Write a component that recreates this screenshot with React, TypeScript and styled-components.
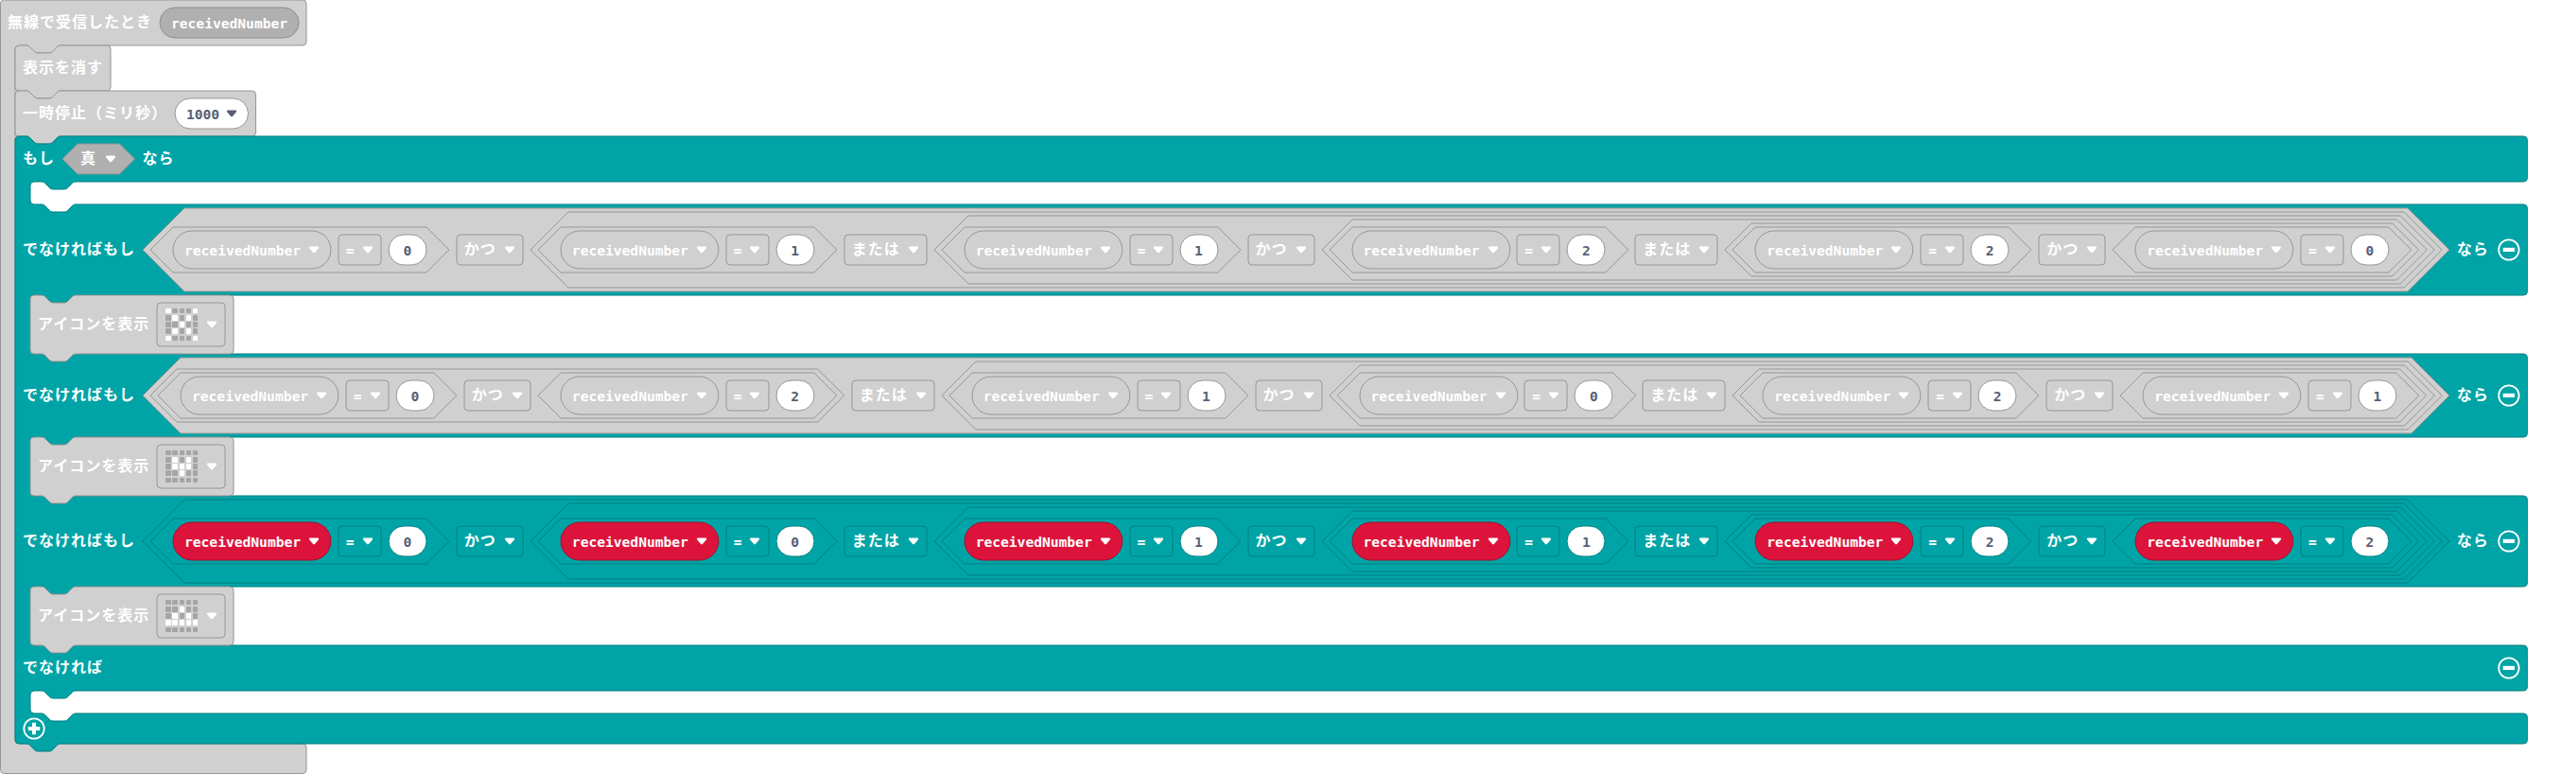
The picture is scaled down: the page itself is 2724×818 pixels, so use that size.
import React from "react";
import styled, { createGlobalStyle } from "styled-components";

const GlobalStyle = createGlobalStyle`
  html, body { margin: 0; padding: 0; background: #fff; }
  #root { width: 2724px; height: 818px; overflow: hidden; }
`;

type Tone = "muted" | "logic" | "variable" | "input" | "inset";

const TONES: Record<Tone, { fill: string; stroke: string }> = {
  muted: { fill: "#d0d0d0", stroke: "#969696" },
  inset: { fill: "#b0b0b0", stroke: "#8f8f8f" },
  logic: { fill: "#00a4a6", stroke: "#007f81" },
  variable: { fill: "#dc143c", stroke: "#a50f2d" },
  input: { fill: "#ffffff", stroke: "#969696" },
};

/* ---------- geometry ---------- */

const GAP = 8;
const CORNER = 4;
const TAB_RIGHTWARD = "c2 0 3 1 4 2l4 4c1 1 2 2 4 2h12c2 0 3 -1 4 -2l4 -4c1 -1 2 -2 4 -2";
const TAB_LEFTWARD = "c-2 0 -3 1 -4 2l-4 4c-1 1 -2 2 -4 2h-12c-2 0 -3 -1 -4 -2l-4 -4c-1 -1 -2 -2 -4 -2";

const statementPath = (w: number, h: number) =>
  `M0 ${CORNER}a4 4 0 0 1 4 -4h8${TAB_RIGHTWARD}H${w - 4}a4 4 0 0 1 4 4V${h - 4}a4 4 0 0 1 -4 4H48${TAB_LEFTWARD}H4a4 4 0 0 1 -4 -4z`;

/* Bars are the solid rows of the C-shaped block; slots are the mouths between them. */
const mouthPath = (w: number, bars: number[], slots: number[]) => {
  let y = 0;
  let d = `M0 4a4 4 0 0 1 4 -4h8${TAB_RIGHTWARD}H${w - 4}`;
  bars.forEach((bar, i) => {
    d += `a4 4 0 0 1 4 4V${y + bar - 4}a4 4 0 0 1 -4 4`;
    y += bar;
    if (i < slots.length) {
      d += `H64${TAB_LEFTWARD}H20a4 4 0 0 0 -4 4V${y + slots[i] - 4}a4 4 0 0 0 4 4h8${TAB_RIGHTWARD}H${w - 4}`;
      y += slots[i];
    }
  });
  return d + `H48${TAB_LEFTWARD}H4a4 4 0 0 1 -4 -4z`;
};

const HAT_PATH =
  `M.5 4a4 4 0 0 1 4 -4H320a4 4 0 0 1 4 4V44a4 4 0 0 1 -4 4H64${TAB_LEFTWARD}H20a4 4 0 0 0 -4 4` +
  "V782a4 4 0 0 0 4 4H320a4 4 0 0 1 4 4V813.5a4 4 0 0 1 -4 4H4.5a4 4 0 0 1 -4 -4z";

const hexPath = (w: number, h: number) =>
  `M0 ${h / 2}L${h / 2} 0H${w - h / 2}L${w} ${h / 2}L${w - h / 2} ${h}H${h / 2}z`;

const roundPath = (w: number, h: number, r: number) =>
  `M${r} 0H${w - r}a${r} ${r} 0 0 1 ${r} ${r}V${h - r}a${r} ${r} 0 0 1 ${-r} ${r}H${r}a${r} ${r} 0 0 1 ${-r} ${-r}V${r}a${r} ${r} 0 0 1 ${r} ${-r}z`;

/* ---------- styled parts ---------- */

const Workspace = styled.main`
  display: flex;
  align-items: flex-start;
  color: #fff;
`;

const Outline = styled.svg`
  position: absolute;
  inset: 0;
  width: 100%;
  height: 100%;
  overflow: visible;
  pointer-events: none;
`;

const HatBlock = styled.section`
  position: relative;
  width: 2673px;
`;

const BlockRow = styled.div<{ $height: number }>`
  position: relative;
  display: flex;
  align-items: center;
  gap: ${GAP}px;
  box-sizing: border-box;
  height: ${(p) => p.$height}px;
  padding: 0 8px;
`;

const Stack = styled.div`
  position: relative;
  display: flex;
  flex-direction: column;
  align-items: flex-start;
  padding-left: 16px;
`;

const StatementBox = styled.div<{ $width: number; $height: number }>`
  position: relative;
  width: ${(p) => p.$width}px;
  height: ${(p) => p.$height}px;
`;

const IfBox = styled.div`
  position: relative;
  width: 2656.5px;
`;

const Slot = styled.div<{ $height: number }>`
  position: relative;
  height: ${(p) => p.$height}px;
  padding-left: 16px;
`;

const HexBox = styled.div<{ $width: number; $height: number; $pad: number }>`
  position: relative;
  flex: none;
  display: flex;
  align-items: center;
  gap: ${GAP}px;
  box-sizing: border-box;
  width: ${(p) => p.$width}px;
  height: ${(p) => p.$height}px;
  padding: 0 ${(p) => p.$pad}px;
`;

const Field = styled.div<{ $width: number; $height: number; $pad: number; $gap?: number }>`
  position: relative;
  flex: none;
  display: flex;
  align-items: center;
  gap: ${(p) => p.$gap ?? 8}px;
  box-sizing: border-box;
  width: ${(p) => p.$width}px;
  height: ${(p) => p.$height}px;
  padding: 0 ${(p) => p.$pad}px;
`;

const Label = styled.span`
  position: relative;
  flex: none;
  margin-top: -5px;
  font: 700 16px/20px "Noto Sans CJK JP", sans-serif;
  letter-spacing: 1px;
  white-space: nowrap;
`;

const Code = styled.span<{ $dark?: boolean }>`
  position: relative;
  flex: none;
  margin-top: 1px;
  font: 700 14.6px/20px "DejaVu Sans Mono", monospace;
  white-space: nowrap;
  color: ${(p) => (p.$dark ? "#575e75" : "#fff")};
`;

const Digit = styled(Code)`
  flex: 1;
  text-align: center;
`;

const ArrowSvg = styled.svg`
  position: relative;
  flex: none;
  width: 12px;
  height: 8px;
`;

const RoundButton = styled.svg<{ $end?: boolean }>`
  position: relative;
  flex: none;
  width: 24px;
  height: 24px;
  margin-left: ${(p) => (p.$end ? "auto" : 0)};
`;

const Leds = styled.div`
  position: relative;
  display: grid;
  grid-template-columns: repeat(5, 5.4px);
  grid-auto-rows: 5.4px;
  gap: 1.8px;
`;

const Led = styled.i<{ $on: boolean }>`
  border-radius: 1px;
  background: ${(p) => (p.$on ? "#fff" : "#a5a5a5")};
`;

/* ---------- building blocks ---------- */

const Shape = ({ d, tone, stroke }: { d: string; tone: Tone; stroke?: string }) => (
  <Outline aria-hidden>
    <path d={d} fill={TONES[tone].fill} stroke={stroke ?? TONES[tone].stroke} strokeWidth={1} />
  </Outline>
);

const Arrow = ({ dark }: { dark?: boolean }) => (
  <ArrowSvg viewBox="0 0 12 8" aria-hidden>
    <path
      d="M2 .6H10Q11.3 .6 11.1 1.7Q11 2.3 10.5 2.8L7.1 6.7Q6 7.9 4.9 6.7L1.5 2.8Q1 2.3 .9 1.7Q.7 .6 2 .6z"
      fill={dark ? "#575e75" : "#fff"}
    />
  </ArrowSvg>
);

const ToggleButton = ({ plus }: { plus?: boolean }) => (
  <RoundButton $end={!plus} viewBox="0 0 24 24" aria-hidden>
    <circle cx="12" cy="12" r="10.7" fill="none" stroke="#fff" strokeWidth="1.8" />
    <path d={plus ? "M10 5.8h4v4.1h4.2v4.2h-4.2v4.1h-4v-4.1H5.8v-4.2h4.2z" : "M5.8 9.8h12.4v4.2H5.8z"} fill="#fff" />
  </RoundButton>
);

const Dropdown = ({ text, tone }: { text: string; tone: Tone }) => {
  const width = text === "=" ? 45 : text.length * 17 + 36;
  return (
    <Field $width={width} $height={32} $pad={8}>
      <Shape d={roundPath(width, 32, 4)} tone={tone} />
      {text === "=" ? <Code>{text}</Code> : <Label>{text}</Label>}
      <Arrow />
    </Field>
  );
};

const OVAL_WIDTH = 166.83;
const COMPARE_WIDTH = 24 + OVAL_WIDTH + 8 + 45 + 8 + 40 + 24;

const Compare = ({ value, tone }: { value: number; tone: Tone }) => (
  <HexBox $width={COMPARE_WIDTH} $height={48} $pad={24}>
    <Shape d={hexPath(COMPARE_WIDTH, 48)} tone={tone} />
    <Field $width={OVAL_WIDTH} $height={40} $pad={12}>
      <Shape d={roundPath(OVAL_WIDTH, 40, 20)} tone={tone === "logic" ? "variable" : tone} />
      <Code>receivedNumber</Code>
      <Arrow />
    </Field>
    <Dropdown text="=" tone={tone} />
    <Field $width={40} $height={32} $pad={0}>
      <Shape d={roundPath(40, 32, 16)} tone="input" stroke={TONES[tone].stroke} />
      <Digit $dark>{value}</Digit>
    </Field>
  </HexBox>
);

type Expr = number | { op: string; left: Expr; right: Expr };

const measure = (e: Expr): { w: number; h: number } => {
  if (typeof e === "number") return { w: COMPARE_WIDTH, h: 48 };
  const l = measure(e.left);
  const r = measure(e.right);
  return { w: 16 + l.w + r.w + 16 + e.op.length * 17 + 36, h: Math.max(l.h, r.h) + 8 };
};

const Expression = ({ expr, tone }: { expr: Expr; tone: Tone }) => {
  if (typeof expr === "number") return <Compare value={expr} tone={tone} />;
  const { w, h } = measure(expr);
  return (
    <HexBox $width={w} $height={h} $pad={8}>
      <Shape d={hexPath(w, h)} tone={tone} />
      <Expression expr={expr.left} tone={tone} />
      <Dropdown text={expr.op} tone={tone} />
      <Expression expr={expr.right} tone={tone} />
    </HexBox>
  );
};

const Statement = ({ width, height = 48, children }: { width: number; height?: number; children: React.ReactNode }) => (
  <StatementBox $width={width} $height={height}>
    <Shape d={statementPath(width, height)} tone="muted" />
    <BlockRow $height={height}>{children}</BlockRow>
  </StatementBox>
);

const ShowIcon = ({ pattern }: { pattern: string }) => (
  <Statement width={215} height={62}>
    <Label>アイコンを表示</Label>
    <Field $width={72} $height={46} $pad={9} $gap={9}>
      <Shape d={roundPath(72, 46, 4)} tone="muted" />
      <Leds>
        {pattern.split("").map((c, i) => (
          <Led key={i} $on={c === "#"} />
        ))}
      </Leds>
      <Arrow />
    </Field>
  </Statement>
);

/* ---------- program ---------- */

const and = (left: Expr, right: Expr): Expr => ({ op: "かつ", left, right });
const or = (left: Expr, right: Expr): Expr => ({ op: "または", left, right });

const BRANCHES: { tone: Tone; height: number; expr: Expr; icon: string }[] = [
  {
    tone: "muted",
    height: 96,
    expr: and(0, or(1, and(1, or(2, and(2, 0))))),
    icon: "#...#.#.#...#...#.#.#...#",
  },
  {
    tone: "muted",
    height: 88,
    expr: or(and(0, 2), and(1, or(0, and(2, 1)))),
    icon: "......#.#..###...#.......",
  },
  {
    tone: "logic",
    height: 96,
    expr: and(0, or(0, and(1, or(1, and(2, 2))))),
    icon: ".......#...#.#.#####.....",
  },
];

const IfBlock = () => (
  <IfBox>
    <Shape d={mouthPath(2656.5, [48, 96, 88, 96, 48, 32], [24, 62, 62, 62, 24])} tone="logic" />
    <BlockRow $height={48}>
      <Label>もし</Label>
      <Field $width={76.5} $height={32} $pad={19} $gap={9}>
        <Shape d={hexPath(76.5, 32)} tone="inset" />
        <Label>真</Label>
        <Arrow />
      </Field>
      <Label>なら</Label>
    </BlockRow>
    <Slot $height={24} />
    {BRANCHES.map((b, i) => (
      <React.Fragment key={i}>
        <BlockRow $height={b.height}>
          <Label>でなければもし</Label>
          <Expression expr={b.expr} tone={b.tone} />
          <Label>なら</Label>
          <ToggleButton />
        </BlockRow>
        <Slot $height={62}>
          <ShowIcon pattern={b.icon} />
        </Slot>
      </React.Fragment>
    ))}
    <BlockRow $height={48}>
      <Label>でなければ</Label>
      <ToggleButton />
    </BlockRow>
    <Slot $height={24} />
    <BlockRow $height={32}>
      <ToggleButton plus />
    </BlockRow>
  </IfBox>
);

const App = () => (
  <>
    <GlobalStyle />
    <Workspace>
      <HatBlock>
        <Shape d={HAT_PATH} tone="muted" />
        <BlockRow $height={48}>
          <Label>無線で受信したとき</Label>
          <Field $width={147} $height={32} $pad={12}>
            <Shape d={roundPath(147, 32, 16)} tone="inset" />
            <Code>receivedNumber</Code>
          </Field>
        </BlockRow>
        <Stack>
          <Statement width={101}>
            <Label>表示を消す</Label>
          </Statement>
          <Statement width={254.5}>
            <Label>一時停止（ミリ秒）</Label>
            <Field $width={77.5} $height={32} $pad={12} $gap={7}>
              <Shape d={roundPath(77.5, 32, 16)} tone="input" />
              <Code $dark>1000</Code>
              <Arrow dark />
            </Field>
          </Statement>
          <IfBlock />
        </Stack>
        <BlockRow $height={32} />
      </HatBlock>
    </Workspace>
  </>
);

export default App;
